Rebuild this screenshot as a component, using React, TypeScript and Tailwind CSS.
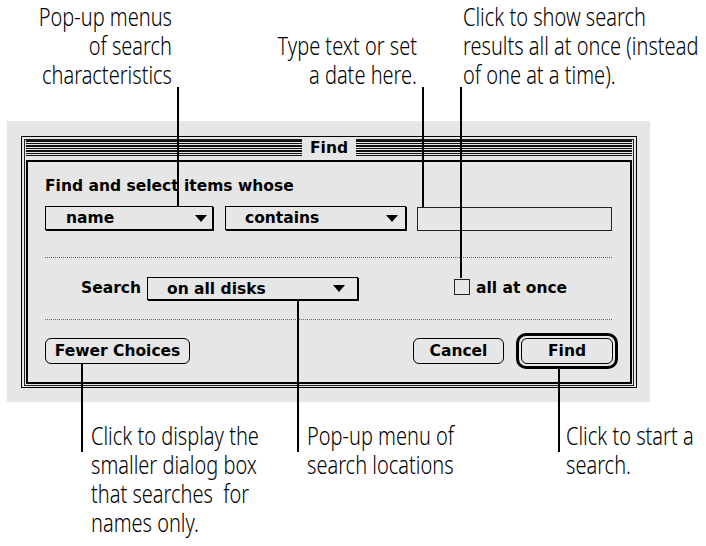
const caption = "font-['Noto_Sans',sans-serif] font-light text-[25px] leading-[29px] text-black whitespace-pre";
const chicago = "font-['DejaVu_Sans',sans-serif] font-bold text-[15.5px] leading-[18px] text-black whitespace-nowrap";

function Arrow() {
  return (
    <svg width="12" height="7" viewBox="0 0 12 7" className="shrink-0">
      <path d="M0 0H12L6 7Z" fill="#000" />
    </svg>
  );
}

function Popup({ label, className }: { label: string; className: string }) {
  return (
    <div
      className={`flex items-center justify-between border border-black bg-[#e6e6e6] shadow-[1px_1px_0_#000] ${className}`}
    >
      <span className={chicago}>{label}</span>
      <Arrow />
    </div>
  );
}

function Leader({ className }: { className: string }) {
  return <div className={`absolute w-[2px] bg-black ${className}`} />;
}

export default function App() {
  return (
    <div className="relative h-[546px] w-[706px] overflow-hidden bg-white">
      {/* captions above the dialog (narrowed to match the condensed face) */}
      <div className={`flex h-[121px] pt-[2px] ${caption}`}>
        <div className="w-[172px] shrink-0 origin-right scale-x-[0.8] text-right">
          <div>Pop-up menus</div>
          <div>of search</div>
          <div>characteristics</div>
        </div>
        <div className="w-[245px] shrink-0 origin-right scale-x-[0.8] pt-[29px] text-right">
          <div>Type text or set</div>
          <div>a date here.</div>
        </div>
        <div className="ml-[46px] shrink-0 origin-left scale-x-[0.8]">
          <div>Click to show search</div>
          <div>results all at once (instead</div>
          <div>of one at a time).</div>
        </div>
      </div>

      {/* gray band with the Find window */}
      <div className="ml-[7px] h-[281px] w-[643px] bg-[#e6e6e6] pl-[14px] pt-[15px]">
        <div className="h-[252px] w-[616px] border border-black px-[2px] pb-[1px] pt-[2px]">
          <div className="flex h-full flex-col border border-[#222] px-[1px]">
            <div className="flex h-[16px] items-center justify-center bg-[repeating-linear-gradient(to_bottom,#e6e6e6_0px,#e6e6e6_0.5px,#111_0.5px,#111_1.6px,#e6e6e6_1.6px,#e6e6e6_2.5px)]">
              <span className={`${chicago} bg-[#e6e6e6] px-[8px] leading-[16px]`}>Find</span>
            </div>

            <div className="mt-[4px] flex h-[224px] flex-col border-2 border-black pl-[17px]">
              <div className={`mt-[15px] ${chicago}`}>Find and select items whose</div>

              <div className="mt-[11px] flex items-start">
                <Popup label="name" className="h-[24px] w-[168px] pl-[20px] pr-[5px]" />
                <Popup label="contains" className="ml-[12px] h-[24px] w-[181px] pl-[19px] pr-[7px]" />
                <div className="ml-[11px] mt-[1px] h-[24px] w-[195px] border border-[#222] bg-[#e6e6e6]" />
              </div>

              <div className="mt-[26px] w-[567px] border-t border-dotted border-[#666]" />

              <div className="mt-[19px] flex items-start">
                <div className={`ml-[36px] mt-[2px] w-[66px] ${chicago}`}>Search</div>
                <Popup label="on all disks" className="h-[23px] w-[211px] pl-[19px] pr-[12px]" />
                <div className="ml-[96px] mt-[2px] h-[16px] w-[16px] border border-[#222] bg-[#e6e6e6]" />
                <span className={`ml-[6px] mt-[2px] ${chicago}`}>all at once</span>
              </div>

              <div className="mt-[19px] w-[567px] border-t border-dotted border-[#666]" />

              <div className="mt-[13px] flex items-start">
                <button className={`mt-[5px] flex h-[26px] w-[145px] items-center justify-center rounded-[6px] border border-black ${chicago}`}>
                  Fewer Choices
                </button>
                <button className={`ml-[223px] mt-[5px] flex h-[26px] w-[91px] items-center justify-center rounded-[6px] border border-black ${chicago}`}>
                  Cancel
                </button>
                <div className="ml-[12px] h-[36px] w-[102px] rounded-[10px] border-[3px] border-black p-[2px]">
                  <button className={`flex h-full w-full items-center justify-center rounded-[6px] border border-black ${chicago}`}>
                    Find
                  </button>
                </div>
              </div>
            </div>
          </div>
        </div>
      </div>

      {/* captions below the dialog */}
      <div className={`flex pt-[19px] ${caption}`}>
        <div className="ml-[91px] w-[216px] shrink-0 origin-left scale-x-[0.8]">
          <div>Click to display the</div>
          <div>smaller dialog box</div>
          <div>that searches  for</div>
          <div>names only.</div>
        </div>
        <div className="w-[259px] shrink-0 origin-left scale-x-[0.8]">
          <div>Pop-up menu of</div>
          <div>search locations</div>
        </div>
        <div className="shrink-0 origin-left scale-x-[0.8]">
          <div>Click to start a</div>
          <div>search.</div>
        </div>
      </div>

      {/* leader lines */}
      <Leader className="left-[177px] top-[87px] h-[119px]" />
      <Leader className="left-[422px] top-[87px] h-[120px]" />
      <Leader className="left-[460px] top-[87px] h-[191px]" />
      <Leader className="left-[81px] top-[363px] h-[89px]" />
      <Leader className="left-[297px] top-[299px] h-[153px]" />
      <Leader className="left-[558px] top-[368px] h-[84px]" />
    </div>
  );
}
